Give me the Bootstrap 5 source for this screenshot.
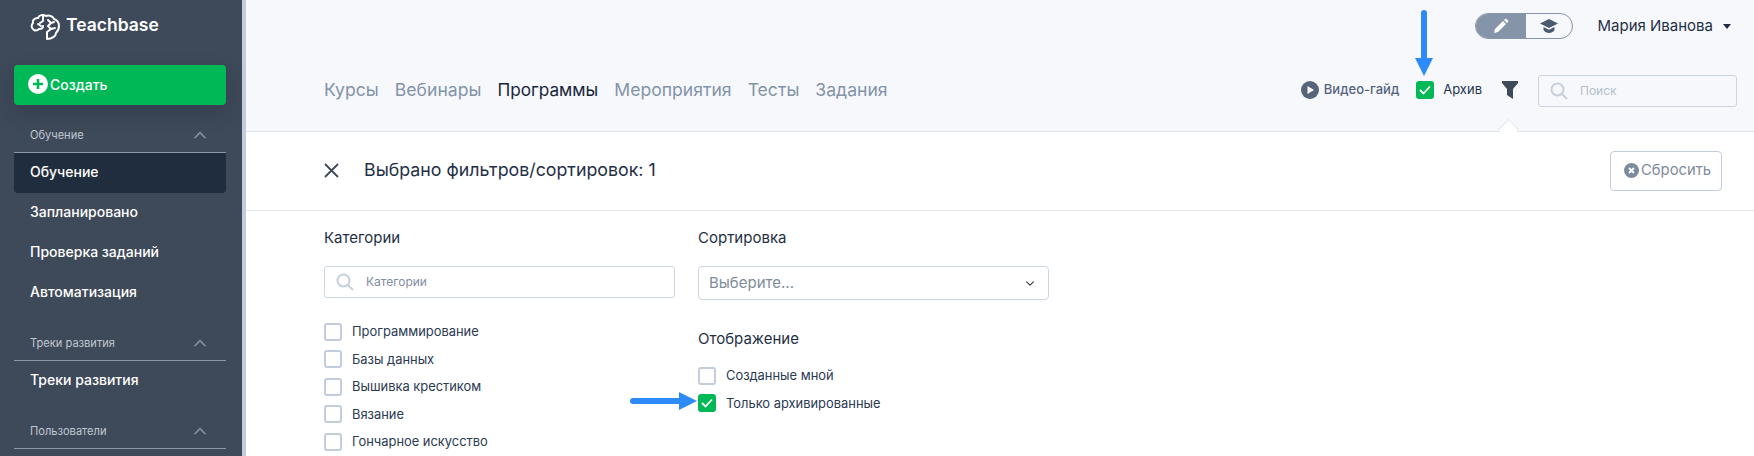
<!DOCTYPE html>
<html lang="ru"><head><meta charset="utf-8"><title>Teachbase</title>
<link rel="stylesheet" href="https://cdn.jsdelivr.net/npm/bootstrap@5.3.0/dist/css/bootstrap.min.css">
<style>
html,body{height:456px;overflow:hidden}
body{font-family:"Inter","Noto Sans",sans-serif;color:#1f2d40;background:#fff;position:relative}
.tb-side{width:242px;height:456px;background:#3e4959;flex:none;color:#fff;overflow:hidden}
.tb-bar{width:4px;height:456px;flex:none;background:#c1cddc}
.tb-logo{height:65px;padding:9px 0 0 30px;font-size:17.5px;font-weight:600;line-height:32px;gap:5px}
.tb-create{width:212px;height:40px;margin-left:14px;background:#00b956;color:#fff;border:0;border-radius:4px;font-size:14px;font-weight:500;padding:0 0 2px 14px;gap:2px;box-shadow:0 8px 20px rgba(20,28,40,.22)}
.tb-sec{width:212px;margin:0 14px;padding:0 20px 0 16px;border-bottom:1px solid #8b97a8;font-size:11.100px;color:#c0c8d2;line-height:16px}
.tb-sec.s1{margin-top:22px;height:26px}
.tb-sec.s2{margin-top:22px;height:26px}
.tb-item{width:212px;margin:0 14px;padding:0 16px;height:40px;line-height:38px;font-size:14px;font-weight:500;color:#fff;border-radius:0 0 4px 4px;display:block;text-decoration:none}
.tb-item.on{background:#202d3e}
.tb-main{flex:1;min-width:0}
.tb-head{height:132px;background:#f7f8fc;border-bottom:1px solid #dfe4ec;position:relative}
.tb-top{height:58px;padding:13px 23px 0 0;gap:24px}
.tb-switch{width:98px;height:26px;border:1px solid #8594a8;border-radius:13px;overflow:hidden}
.tb-switch span{flex:1;display:flex;align-items:center;justify-content:center}
.tb-switch .on{background:#8594a8;flex:0 0 50px}
.tb-user{font-size:15px;color:#1f3046;line-height:26px;gap:10px}
.tb-caret{width:0;height:0;border:4px solid transparent;border-top:5px solid #1f2d40;border-bottom:0}
.tb-nav{height:64px;padding:0 17px 0 78px}
.tb-links{gap:16px;font-size:17.600px}
.tb-links a{color:#8393a8;text-decoration:none}
.tb-links a.on{color:#16263a;font-size:17.200px}
.tb-guide{font-size:13px;color:#54647c;font-weight:500;gap:5px;margin-right:17px}
.tb-chk{width:18px;height:18px;border-radius:3px;border:2px solid #c1cddc;background:#fff;flex:none;display:flex;align-items:center;justify-content:center}
.tb-chk.on{background:#00b956;border-color:#00b956}
.tb-arch{font-size:13px;color:#24364e;gap:9px;margin-right:20px}
.tb-search{border:1px solid #ccd6e2;border-radius:3px;height:32px;background:transparent;padding:0 0 0 11px;gap:12px;font-size:12px;color:#b4bfcc}
.tb-s1{width:199px;margin:2px 0 0 20px}
.tb-notch{position:absolute;left:1255px;top:122px;width:15px;height:15px;background:#fff;border-left:1px solid #dfe4ec;border-top:1px solid #dfe4ec;transform:rotate(45deg)}
.tb-fbar{height:79px;border-bottom:1px solid #e1e5ea;padding:0 32px 1px 78px;position:relative}
.tb-ftitle{font-size:17.800px;color:#1f3046;margin-left:25px}
.tb-reset{width:112px;height:40px;border:1px solid #c1cddc;border-radius:4px;background:#fff;color:#7d8b9e;font-size:14.800px;padding:0 0 0 13px;gap:2px;margin-left:auto}
.tb-filters{padding:0 0 0 78px;gap:23px}
.tb-col{width:351px;padding-top:17px}
.tb-lbl{font-size:15px;color:#1f3046;line-height:20px;margin:0 0 18px}
.tb-lbl2{margin:29px 0 13px}
.tb-s2{height:32px;width:351px;color:#7f8da0;margin-bottom:20px}
.tb-sel{height:34px;border:1px solid #ccd6e2;border-radius:4px;background-color:#fff;background-size:12px 9px;font-size:15px;color:#808c9b;padding:0 10px;box-shadow:none;font-family:inherit}
.tb-row{height:27.5px;gap:10px;font-size:12.900px;color:#2b3b52}
.tb-arrow{position:absolute}
</style></head>
<body>
<div class="d-flex">
<aside class="tb-side">
  <div class="tb-logo d-flex align-items-start">
    <svg width="31" height="28" viewBox="0 0 31 28" fill="none" stroke="#fff" stroke-width="2" stroke-linecap="round" stroke-linejoin="round" class="mt-1"><path d="M8 5c1-3 5-4 8-2 3-1 7 0 8 3 3 1 5 4 5 7s-1 5-3 7c0 3-4 6-9 6"/><path d="M8 5C4 5 2 8 3 10c-2 2-2 5 1 7 2 1 4 0 5-1 2 0 4-1 4-3"/><path d="M13 3v5l-3 2M8 11l3 2M18 7l3 3-3 3 3 3-4 3v6M24 9l-3 1M25 15l-4 1"/></svg>
    <span>Teachbase</span>
  </div>
  <button class="tb-create btn d-flex align-items-center" type="button">
    <svg width="20" height="20" viewBox="0 0 20 20"><circle cx="10" cy="10" r="10" fill="#fff"/><path d="M10 5v10M5 10h10" stroke="#00b956" stroke-width="2.6"/></svg>
    <span>Создать</span>
  </button>
  <div class="tb-sec s1 d-flex justify-content-between align-items-start">Обучение<svg width="12" height="8" viewBox="0 0 12 8" fill="none" stroke="#8d98a7" stroke-width="1.5" class="mt-1"><path d="M.8 7 6 1.5 11.200 7"/></svg></div>
  <a class="tb-item on" href="#">Обучение</a>
  <a class="tb-item" href="#">Запланировано</a>
  <a class="tb-item" href="#">Проверка заданий</a>
  <a class="tb-item" href="#">Автоматизация</a>
  <div class="tb-sec s2 d-flex justify-content-between align-items-start">Треки развития<svg width="12" height="8" viewBox="0 0 12 8" fill="none" stroke="#8d98a7" stroke-width="1.500" class="mt-1"><path d="M.8 7 6 1.500 11.200 7"/></svg></div>
  <a class="tb-item" href="#">Треки развития</a>
  <div class="tb-sec s2 d-flex justify-content-between align-items-start">Пользователи<svg width="12" height="8" viewBox="0 0 12 8" fill="none" stroke="#8d98a7" stroke-width="1.5" class="mt-1"><path d="M.8 7 6 1.5 11.200 7"/></svg></div>
</aside>
<div class="tb-bar"></div>
<main class="tb-main">
  <header class="tb-head">
    <div class="tb-top d-flex justify-content-end">
      <div class="tb-switch d-flex">
        <span class="on"><svg width="16" height="16" viewBox="0 0 16 16" fill="#fff"><path d="M1 15l1-4 8-8 3 3-8 8zM11 2l1-1c.5-.5 1-.5 1.500 0l1.500 1.500c.5.5.5 1 0 1.500l-1 1z"/></svg></span>
        <span><svg width="18" height="14" viewBox="0 0 18 14" fill="#4b5a6e"><path d="M9 0 0 4.500 9 9l9-4.500z"/><path d="M3.500 8v3c1 1.800 3.500 3 5.500 3s4.500-1.200 5.500-3V8L9 10.700z"/></svg></span>
      </div>
      <div class="tb-user d-flex align-items-center align-self-start">Мария Иванова<i class="tb-caret"></i></div>
    </div>
    <div class="tb-nav d-flex align-items-center">
      <nav class="tb-links d-flex align-items-center"><a href="#">Курсы</a><a href="#">Вебинары</a><a href="#" class="on">Программы</a><a href="#">Мероприятия</a><a href="#">Тесты</a><a href="#">Задания</a></nav>
      <div class="tb-guide d-flex align-items-center ms-auto"><svg width="18" height="18" viewBox="0 0 18 18"><circle cx="9" cy="9" r="9" fill="#566579"/><path d="M6.500 5v8l6.500-4z" fill="#fff"/></svg>Видео-гайд</div>
      <div class="tb-arch d-flex align-items-center"><span class="tb-chk on"><svg width="12" height="10" viewBox="0 0 12 10" fill="none" stroke="#fff" stroke-width="1.800"><path d="M1 5l3.500 3.500L11 1.500"/></svg></span>Архив</div>
      <svg width="16" height="18" viewBox="0 0 16 18" fill="#3e4959"><path d="M0 0h16v2l-5 6v10l-6-4V8L0 2z"/></svg>
      <div class="tb-search tb-s1 d-flex align-items-center"><svg width="18" height="18" viewBox="0 0 18 18" fill="none" stroke="#c5d0dc" stroke-width="2"><circle cx="7.500" cy="7.500" r="6"/><path d="M12 12l5 5"/></svg>Поиск</div>
    </div>
    <i class="tb-notch"></i>
  </header>
  <div class="tb-fbar d-flex align-items-center">
    <svg width="15" height="15" viewBox="0 0 15 15" stroke="#3e4959" stroke-width="1.800"><path d="M1 1l13 13M14 1 1 14"/></svg>
    <div class="tb-ftitle">Выбрано фильтров/сортировок: 1</div>
    <button class="tb-reset btn d-flex align-items-center" type="button"><svg width="15" height="15" viewBox="0 0 15 15"><circle cx="7.500" cy="7.500" r="7.500" fill="#7d8b9e"/><path d="M5 5l5 5M10 5l-5 5" stroke="#fff" stroke-width="1.800"/></svg>Сбросить</button>
  </div>
  <div class="tb-filters d-flex">
    <div class="tb-col">
      <div class="tb-lbl">Категории</div>
      <div class="tb-search tb-s2 d-flex align-items-center"><svg width="18" height="18" viewBox="0 0 18 18" fill="none" stroke="#c5d0dc" stroke-width="2"><circle cx="7.500" cy="7.500" r="6"/><path d="M12 12l5 5"/></svg>Категории</div>
      <div class="tb-row d-flex align-items-center"><span class="tb-chk"></span>Программирование</div>
      <div class="tb-row d-flex align-items-center"><span class="tb-chk"></span>Базы данных</div>
      <div class="tb-row d-flex align-items-center"><span class="tb-chk"></span>Вышивка крестиком</div>
      <div class="tb-row d-flex align-items-center"><span class="tb-chk"></span>Вязание</div>
      <div class="tb-row d-flex align-items-center"><span class="tb-chk"></span>Гончарное искусство</div>
    </div>
    <div class="tb-col">
      <div class="tb-lbl">Сортировка</div>
      <select class="form-select tb-sel"><option>Выберите...</option></select>
      <div class="tb-lbl tb-lbl2">Отображение</div>
      <div class="tb-row d-flex align-items-center"><span class="tb-chk"></span>Созданные мной</div>
      <div class="tb-row d-flex align-items-center"><span class="tb-chk on"><svg width="12" height="10" viewBox="0 0 12 10" fill="none" stroke="#fff" stroke-width="1.800"><path d="M1 5l3.500 3.500L11 1.500"/></svg></span>Только архивированные</div>
    </div>
  </div>
</main>
</div>
<svg class="tb-arrow" style="left:1414px;top:9px" width="20" height="67" viewBox="0 0 20 67" fill="#2e8af6"><rect x="7" y="1" width="6" height="50" rx="3"/><path d="M1 49h18l-9 18z"/></svg>
<svg class="tb-arrow" style="left:629px;top:391px" width="68" height="20" viewBox="0 0 68 20" fill="#2e8af6"><rect x="1" y="7" width="52" height="6" rx="3"/><path d="M50 1v18l18-9z"/></svg>
</body></html>
